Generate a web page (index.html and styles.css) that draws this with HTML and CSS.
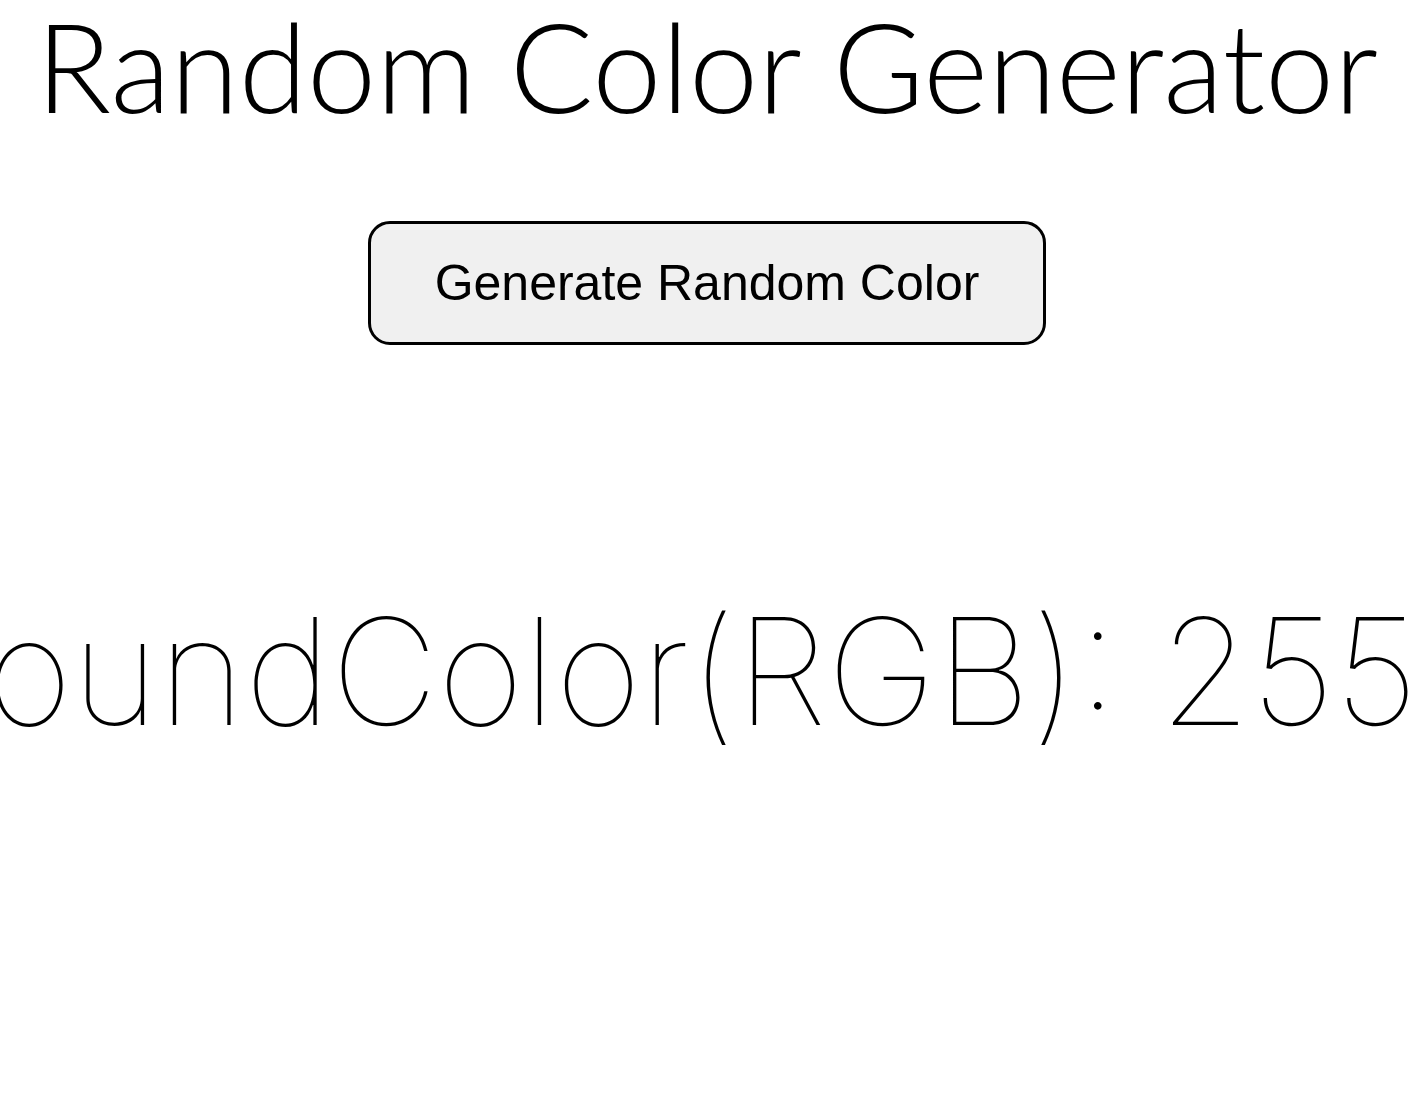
FILE: index.html
```html
<!DOCTYPE html>
<html>
<head>
<meta charset="utf-8">
<title>Random Color Generator</title>
<link rel="stylesheet" href="styles.css">
</head>
<body>
<main class="page">
  <h1 class="title">Random Color Generator</h1>
  <button class="generate" type="button">Generate Random Color</button>
  <p class="readout">backgroundColor(RGB): 255, 255</p>
</main>
</body>
</html>
```
FILE: styles.css
```css
html, body {
  margin: 0;
  padding: 0;
  background: #ffffff;
  overflow: hidden;
}

.page {
  display: flex;
  flex-direction: column;
  align-items: center;
  width: 100%;
  min-height: 1102px;
  overflow: hidden;
}

.title {
  margin: 3px 0 0;
  font-family: Lato, "Liberation Sans", sans-serif;
  font-weight: 300;
  font-size: 124px;
  line-height: 1;
  color: #000;
  white-space: nowrap;
}

.generate {
  margin-top: 94px;
  padding: 30px 64px;
  border: 3px solid #000;
  border-radius: 22px;
  background: #f0f0f0;
  font-family: "Liberation Sans", Arial, sans-serif;
  font-size: 50px;
  line-height: 58px;
  color: #000;
  cursor: pointer;
}

.readout {
  margin: 253px 118px 0 0;
  font-family: Inter, "Liberation Sans", sans-serif;
  font-weight: 100;
  font-size: 148px;
  line-height: 1;
  color: #000;
  white-space: nowrap;
  flex-shrink: 0;
}
```
